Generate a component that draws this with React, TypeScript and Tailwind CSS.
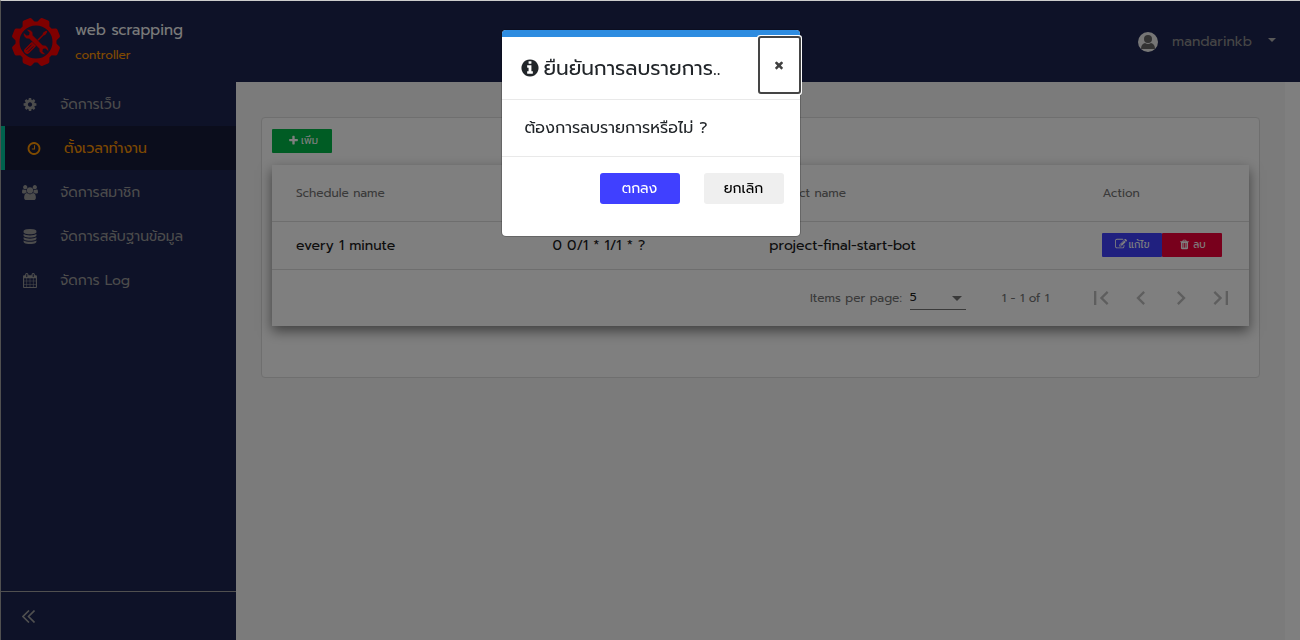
import React from "react";

type IconProps = { d: string; className?: string; viewBox?: string };

function Icon({ d, className, viewBox = "0 0 1792 1792" }: IconProps) {
  return (
    <svg viewBox={viewBox} className={className} fill="currentColor" aria-hidden="true">
      <path d={d} />
    </svg>
  );
}

const icons = {
  cog: "M1152 896q0-106-75-181t-181-75-181 75-75 181 75 181 181 75 181-75 75-181zm512-109v222q0 12-8 23t-20 13l-185 28q-19 54-39 91 35 50 107 138 10 12 10 25t-9 23q-27 37-99 108t-94 71q-12 0-26-9l-138-108q-44 23-91 38-16 136-29 186-7 28-36 28h-222q-14 0-24.5-8.5t-11.5-21.5l-28-184q-49-16-90-37l-141 107q-10 9-25 9-14 0-25-11-126-114-165-168-7-10-7-23 0-12 8-23 15-21 51-66.5t54-70.5q-27-50-41-99l-183-27q-13-2-21-12.5t-8-23.5v-222q0-12 8-23t19-13l186-28q14-46 39-92-40-57-107-138-10-12-10-24 0-10 9-23 26-36 98.5-107.5t94.5-71.5q13 0 26 10l138 107q44-23 91-38 16-136 29-186 7-28 36-28h222q14 0 24.5 8.5t11.5 21.5l28 184q49 16 90 37l142-107q9-9 24-9 13 0 25 10 129 119 165 170 7 8 7 22 0 12-8 23-15 21-51 66.5t-54 70.5q26 50 41 98l183 28q13 2 21 12.5t8 23.5z",
  clock: "M1024 544v448q0 14-9 23t-23 9h-320q-14 0-23-9t-9-23v-64q0-14 9-23t23-9h224v-352q0-14 9-23t23-9h64q14 0 23 9t9 23zm416 352q0-148-73-273t-198-198-273-73-273 73-198 198-73 273 73 273 198 198 273 73 273-73 198-198 73-273zm224 0q0 209-103 385.5t-279.5 279.5-385.5 103-385.5-103-279.5-279.5-103-385.5 103-385.5 279.5-279.5 385.5-103 385.5 103 279.5 279.5 103 385.5z",
  users: "M593 896q-162 5-265 128h-134q-82 0-138-40.5t-56-118.5q0-353 124-353 6 0 43.5 21t97.5 42.5 119 21.5q67 0 133-23-5 37-5 66 0 139 81 256zm1071 637q0 120-73 189.5t-194 69.5h-874q-121 0-194-69.5t-73-189.5q0-53 3.5-103.5t14-109 26.5-108.5 43-97.5 62-81 85.5-53.5 111.5-20q10 0 43 21.5t73 48 107 48 135 21.5 135-21.5 107-48 73-48 43-21.5q61 0 111.5 20t85.5 53.5 62 81 43 97.5 26.5 108.5 14 109 3.5 103.5zm-1024-1277q0 106-75 181t-181 75-181-75-75-181 75-181 181-75 181 75 75 181zm704 384q0 159-112.5 271.5t-271.5 112.5-271.5-112.5-112.5-271.5 112.5-271.5 271.5-112.5 271.5 112.5 112.5 271.5zm576 225q0 78-56 118.5t-138 40.5h-134q-103-123-265-128 81-117 81-256 0-29-5-66 66 23 133 23 59 0 119-21.5t97.5-42.5 43.5-21q124 0 124 353zm-128-609q0 106-75 181t-181 75-181-75-75-181 75-181 181-75 181 75 75 181z",
  database: "M896 768q237 0 443-43t325-127v170q0 69-103 128t-280 93.5-385 34.5-385-34.5-280-93.5-103-128v-170q119 84 325 127t443 43zm0 768q237 0 443-43t325-127v170q0 69-103 128t-280 93.5-385 34.5-385-34.5-280-93.5-103-128v-170q119 84 325 127t443 43zm0-384q237 0 443-43t325-127v170q0 69-103 128t-280 93.5-385 34.5-385-34.5-280-93.5-103-128v-170q119 84 325 127t443 43zm0-1152q208 0 385 34.5t280 93.5 103 128v128q0 69-103 128t-280 93.5-385 34.5-385-34.5-280-93.5-103-128v-128q0-69 103-128t280-93.5 385-34.5z",
  calendar: "M192 1664h288v-288h-288v288zm352 0h320v-288h-320v288zm-352-352h288v-320h-288v320zm352 0h320v-320h-320v320zm-352-384h288v-288h-288v288zm736 736h320v-288h-320v288zm-384-736h320v-288h-320v288zm768 736h288v-288h-288v288zm-384-352h320v-320h-320v320zm-352-864v-288q0-13-9.5-22.5t-22.5-9.5h-64q-13 0-22.5 9.5t-9.5 22.5v288q0 13 9.5 22.5t22.5 9.5h64q13 0 22.5-9.5t9.5-22.5zm736 864h288v-320h-288v320zm-384-384h320v-288h-320v288zm384 0h288v-288h-288v288zm32-480v-288q0-13-9.5-22.5t-22.5-9.5h-64q-13 0-22.5 9.5t-9.5 22.5v288q0 13 9.5 22.5t22.5 9.5h64q13 0 22.5-9.5t9.5-22.5zm384-64v1280q0 52-38 90t-90 38h-1408q-52 0-90-38t-38-90v-1280q0-52 38-90t90-38h128v-96q0-66 47-113t113-47h64q66 0 113 47t47 113v96h384v-96q0-66 47-113t113-47h64q66 0 113 47t47 113v96h128q52 0 90 38t38 90z",
  plus: "M1600 736v192q0 40-28 68t-68 28h-416v416q0 40-28 68t-68 28h-192q-40 0-68-28t-28-68v-416h-416q-40 0-68-28t-28-68v-192q0-40 28-68t68-28h416v-416q0-40 28-68t68-28h192q40 0 68 28t28 68v416h416q40 0 68 28t28 68z",
  close: "M1490 1322q0 40-28 68l-136 136q-28 28-68 28t-68-28l-294-294-294 294q-28 28-68 28t-68-28l-136-136q-28-28-28-68t28-68l294-294-294-294q-28-28-28-68t28-68l136-136q28-28 68-28t68 28l294 294 294-294q28-28 68-28t68 28l136 136q28 28 28 68t-28 68l-294 294 294 294q28 28 28 68z",
  info: "M1152 1376v-160q0-14-9-23t-23-9h-96v-512q0-14-9-23t-23-9h-320q-14 0-23 9t-9 23v160q0 14 9 23t23 9h96v320h-96q-14 0-23 9t-9 23v160q0 14 9 23t23 9h448q14 0 23-9t9-23zm-128-896v-160q0-14-9-23t-23-9h-192q-14 0-23 9t-9 23v160q0 14 9 23t23 9h192q14 0 23-9t9-23zm640 416q0 209-103 385.5t-279.5 279.5-385.5 103-385.5-103-279.5-279.5-103-385.5 103-385.5 279.5-279.5 385.5-103 385.5 103 279.5 279.5 103 385.5z",
  trash: "M704 1376v-704q0-14-9-23t-23-9h-64q-14 0-23 9t-9 23v704q0 14 9 23t23 9h64q14 0 23-9t9-23zm256 0v-704q0-14-9-23t-23-9h-64q-14 0-23 9t-9 23v704q0 14 9 23t23 9h64q14 0 23-9t9-23zm256 0v-704q0-14-9-23t-23-9h-64q-14 0-23 9t-9 23v704q0 14 9 23t23 9h64q14 0 23-9t9-23zm-544-992h448l-48-117q-7-9-17-11h-317q-10 2-17 11zm928 32v64q0 14-9 23t-23 9h-96v948q0 83-47 143.5t-113 60.5h-832q-66 0-113-58.5t-47-141.5v-952h-96q-14 0-23-9t-9-23v-64q0-14 9-23t23-9h309l70-167q15-37 54-63t79-26h320q40 0 79 26t54 63l70 167h309q14 0 23 9t9 23z",
  edit: "M888 1184l116-116-152-152-116 116v56h96v96h56zm440-720q-16-16-33 1l-350 350q-17 17-1 33t33-1l350-350q17-17 1-33zm80 594v190q0 119-84.5 203.5t-203.5 84.5h-832q-119 0-203.5-84.5t-84.5-203.5v-832q0-119 84.5-203.5t203.5-84.5h832q63 0 117 25 15 7 18 23 3 17-9 29l-49 49q-14 14-32 8-23-6-45-6h-832q-66 0-113 47t-47 113v832q0 66 47 113t113 47h832q66 0 113-47t47-113v-126q0-13 9-22l64-64q15-15 35-7t20 29zm-96-738l288 288-672 672h-288v-288zm444 132l-92 92-288-288 92-92q28-28 68-28t68 28l152 152q28 28 28 68t-28 68z",
  firstPage: "M18.41 16.59L13.82 12l4.59-4.59L17 6l-6 6 6 6zM6 6h2v12H6z",
  previousPage: "M15.41 7.41L14 6l-6 6 6 6 1.41-1.41L10.83 12z",
  nextPage: "M10 6L8.59 7.41 13.17 12l-4.58 4.59L10 18l6-6z",
  lastPage: "M5.59 7.41L10.18 12l-4.59 4.59L7 18l6-6-6-6zM16 6h2v12h-2z",
};

const menu = [
  { label: "จัดการเว็บ", icon: icons.cog },
  { label: "ตั้งเวลาทำงาน", icon: icons.clock, active: true },
  { label: "จัดการสมาชิก", icon: icons.users, viewBox: "0 0 1920 1792" },
  { label: "จัดการสลับฐานข้อมูล", icon: icons.database },
  { label: "จัดการ Log", icon: icons.calendar },
];

const schedules = [
  { name: "every 1 minute", cron: "0 0/1 * 1/1 * ?", project: "project-final-start-bot" },
];

const pager = [
  { label: "First page", icon: icons.firstPage },
  { label: "Previous page", icon: icons.previousPage },
  { label: "Next page", icon: icons.nextPage },
  { label: "Last page", icon: icons.lastPage },
];

function Logo() {
  const teeth = [0, 45, 90, 135, 180, 225, 270, 315];
  return (
    <svg viewBox="-50 -50 100 100" className="size-[50px] shrink-0" fill="#ff0000" aria-hidden="true">
      {teeth.map((angle) => (
        <path key={angle} transform={`rotate(${angle + 22.5})`} d="M-14-36L-10-46Q-9-49-6-49H6Q9-49 10-46L14-36Z" />
      ))}
      <circle r="37" fill="none" stroke="#ff0000" strokeWidth="8" />
      <g transform="rotate(45)">
        <path d="M-2-29L-1-31H1L2-29L3-23L1.500-20V4H-1.500V-20L-3-23Z" />
        <path d="M-6 7Q-6 4-3 4H3Q6 4 6 7V26Q6 31 0 31Q-6 31-6 26Z" />
        <path d="M-2.500 10V25M2.500 10V25" stroke="#1c2450" strokeWidth="1.600" />
      </g>
      <path
        transform="rotate(-45)"
        stroke="#1c2450"
        strokeWidth="1"
        d="M-5-14Q-10-17-9-24Q-8-28-4-31V-23L0-20L4-23V-31Q8-28 9-24Q10-17 5-14V14Q10 17 9 24Q8 28 4 31V23L0 20L-4 23V31Q-8 28-9 24Q-10 17-5 14Z"
      />
    </svg>
  );
}

function Avatar() {
  return (
    <svg viewBox="0 0 20 20" className="size-5" aria-hidden="true">
      <circle cx="10" cy="10" r="10" fill="#ededed" />
      <circle cx="10" cy="7" r="4" fill="#666" />
      <path d="M3 17q0-5 4-6 3 2 6 0 4 1 4 6z" fill="#666" />
    </svg>
  );
}

function Header() {
  return (
    <header className="flex h-[81px] items-center justify-between bg-[#1c2450] pr-6 pl-[10px]">
      <div className="flex items-center gap-[14px]">
        <Logo />
        <div>
          <div className="text-[15px] leading-6 text-[#f5f5f5]">web scrapping</div>
          <div className="mt-[3px] text-[12px] leading-5 text-[#ff9500]">controller</div>
        </div>
      </div>
      <button type="button" className="flex items-center text-[14px] text-[#8c8c8c]">
        <Avatar />
        <span className="ml-[14px]">mandarinkb</span>
        <svg viewBox="0 0 8 4" className="mb-1 ml-4 h-1 w-2" fill="#b0b0b0" aria-hidden="true">
          <path d="M0 0h8L4 4z" />
        </svg>
      </button>
    </header>
  );
}

function Sidebar() {
  return (
    <aside className="flex w-[235px] shrink-0 flex-col justify-between bg-[#1c2450]">
      <nav>
        {menu.map((item) => (
          <a
            key={item.label}
            href="#"
            className={
              item.active
                ? "flex h-11 items-center border-l-4 border-[#00c49a] bg-[#161b38] pl-5 text-[14px] text-[#ff9500]"
                : "flex h-11 items-center pl-5 text-[14px] text-[#989898]"
            }
          >
            <span className="flex w-[18px] justify-center">
              <Icon d={item.icon} viewBox={item.viewBox} className="h-[15px] w-4" />
            </span>
            <span className="ml-[21px]">{item.label}</span>
          </a>
        ))}
      </nav>
      <div className="h-[49px] border-t border-[#a0a0a0]">
        <button type="button" aria-label="Collapse menu" className="mt-[18px] ml-[21px] block text-[#a0a0a0]">
          <svg viewBox="0 0 13 13" className="size-[13px]" fill="none" stroke="currentColor" strokeWidth="1.600" aria-hidden="true">
            <path d="M7 .5l-6 6 6 6M12.500 .5l-6 6 6 6" />
          </svg>
        </button>
      </div>
    </aside>
  );
}

function ScheduleCard() {
  return (
    <div className="bg-white text-[#1a1a1a] shadow-[0_5px_12px_rgba(0,0,0,0.5)]">
      <table className="w-full table-fixed border-collapse text-left">
        <colgroup>
          <col className="w-[28.700%]" />
          <col className="w-[22.200%]" />
          <col className="w-[34.100%]" />
          <col />
        </colgroup>
        <thead>
          <tr className="h-14 border-b border-[#dcdcdc] text-[12px] text-[#757575]">
            <th className="pl-6 font-normal">Schedule name</th>
            <th className="font-normal">Cron</th>
            <th className="font-normal">Project name</th>
            <th className="font-normal">Action</th>
          </tr>
        </thead>
        <tbody>
          {schedules.map((row) => (
            <tr key={row.name} className="h-12 border-b border-[#dcdcdc] text-[14px]">
              <td className="pl-6">{row.name}</td>
              <td>{row.cron}</td>
              <td>{row.project}</td>
              <td>
                <div className="flex text-[10px] text-white">
                  <button type="button" className="flex h-6 w-[60px] items-center justify-center gap-px rounded-[1px] bg-[#4040ff] pb-0.5">
                    <Icon d={icons.edit} className="size-3" />
                    แก้ไข
                  </button>
                  <button type="button" className="flex h-6 w-[60px] items-center justify-center gap-[3px] rounded-[1px] bg-[#f00038] pb-0.5">
                    <Icon d={icons.trash} className="size-[11px]" />
                    ลบ
                  </button>
                </div>
              </td>
            </tr>
          ))}
        </tbody>
      </table>
      <div className="flex h-14 items-center justify-end pr-2 text-[12px] text-[#757575]">
        <label htmlFor="page-size">Items per page:</label>
        <div className="relative ml-2">
          <select id="page-size" className="h-6 w-14 appearance-none border-b border-[#757575] text-[12px] text-[#202020]" defaultValue="5">
            <option>5</option>
            <option>10</option>
            <option>25</option>
          </select>
          <svg viewBox="0 0 10 5" className="pointer-events-none absolute top-[10px] right-1 h-[5px] w-[10px]" fill="#757575" aria-hidden="true">
            <path d="M0 0h10L5 5z" />
          </svg>
        </div>
        <span className="mr-8 ml-9">1 - 1 of 1</span>
        {pager.map((item) => (
          <button key={item.label} type="button" aria-label={item.label} className="flex size-10 items-center justify-center text-[#bdbdbd]">
            <Icon d={item.icon} viewBox="0 0 24 24" className="size-7" />
          </button>
        ))}
      </div>
    </div>
  );
}

function ConfirmDialog() {
  return (
    <div className="fixed top-px right-0 bottom-0 left-px bg-black/50">
      <div
        role="dialog"
        aria-modal="true"
        aria-labelledby="confirm-title"
        className="mx-auto mt-7 w-[300px] overflow-visible rounded-[5px] border border-black/20 bg-white bg-clip-padding text-[#212529]"
      >
        <div className="h-[7px] rounded-t-[4px] bg-[#2e8ce0]" />
        <div className="flex h-[63px] items-start justify-between border-b border-[#e9e9e9] pr-px pl-[18px]">
          <h5 id="confirm-title" className="flex h-[62px] items-center gap-1 text-[20px] leading-[30px]">
            <Icon d={icons.info} className="size-5" />
            ยืนยันการลบรายการ..
          </h5>
          <button
            type="button"
            aria-label="Close"
            className="mt-px flex h-[54px] w-[39px] items-center justify-center rounded-[1px] text-[#404040] ring-3 ring-white outline-2 outline-[#454545]"
          >
            <Icon d={icons.close} className="size-3" />
          </button>
        </div>
        <p className="flex h-14 items-center pl-[23px] text-[16px] leading-6">ต้องการลบรายการหรือไม่ ?</p>
        <div className="flex h-20 items-start justify-end gap-6 border-t border-[#e9e9e9] px-4 pt-4 text-[14px]">
          <button type="button" className="h-[31px] w-20 rounded-[3px] bg-[#4040ff] text-white">
            ตกลง
          </button>
          <button type="button" className="h-[31px] w-20 rounded-[3px] bg-[#efefef] text-black">
            ยกเลิก
          </button>
        </div>
      </div>
    </div>
  );
}

export default function App() {
  return (
    <div className="flex min-h-screen flex-col border-t border-l border-t-[#cccccc] border-l-[#505050] font-['Prompt','Noto_Sans','Noto_Sans_Thai',sans-serif]">
      <Header />
      <div className="flex flex-1 items-stretch">
        <Sidebar />
        <main className="mr-[15px] min-w-0 flex-1 bg-[#f6f6f6] px-[25px] pt-[35px]">
          <section className="rounded-[4px] border border-[#dfdfdf] bg-white px-[10px] pt-[11px] pb-[51px]">
            <button type="button" className="mb-3 flex h-6 w-[60px] items-center justify-center gap-0.5 rounded-[1px] bg-[#00b848] pb-0.5 pl-0.5 text-[10px] text-white">
              <Icon d={icons.plus} className="size-[11px]" />
              เพิ่ม
            </button>
            <ScheduleCard />
          </section>
        </main>
      </div>
      <ConfirmDialog />
    </div>
  );
}
